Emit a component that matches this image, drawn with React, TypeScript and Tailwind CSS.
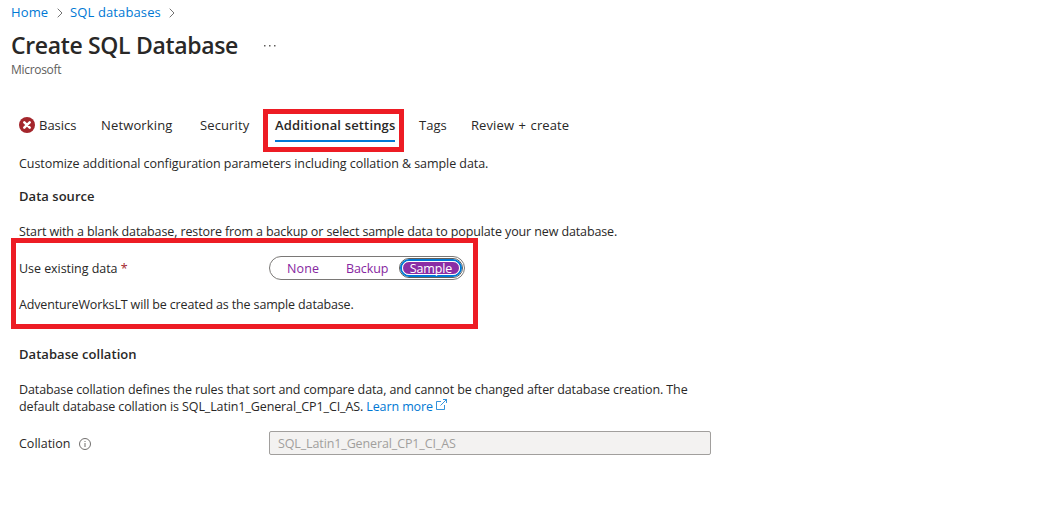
import type { ReactNode } from "react";

function Tab({ children, className = "" }: { children: ReactNode; className?: string }) {
  return (
    <button className={`flex h-[34px] shrink-0 items-center border-b-2 pt-[4px] text-[13px] ${className}`}>
      {children}
    </button>
  );
}

function Chevron() {
  return (
    <svg className="h-[10px] w-[6px] shrink-0" viewBox="0 0 6 10" fill="none" stroke="#737373">
      <path d="M.7.7 5 5 .7 9.3" />
    </svg>
  );
}

function ErrorIcon() {
  return (
    <svg className="-mt-[3px] mr-1 h-4 w-4 shrink-0" viewBox="0 0 16 16">
      <circle cx="8" cy="8" r="8" fill="#a4262c" />
      <path d="m5.3 5.3 5.4 5.4m0-5.4-5.4 5.4" stroke="#fff" strokeWidth="2.5" strokeLinecap="round" />
    </svg>
  );
}

function InfoIcon() {
  return (
    <svg className="mt-[1px] h-3 w-3 shrink-0" viewBox="0 0 12 12" fill="none" stroke="#605e5c">
      <circle cx="6" cy="6" r="5.5" strokeWidth=".9" />
      <path d="M6 5v4M6 3v1" strokeWidth=".9" />
    </svg>
  );
}

function ExternalIcon() {
  return (
    <svg className="ml-[3px] inline-block h-[11px] w-[11px] align-[1px]" viewBox="0 0 11 11" fill="none" stroke="#0078d4" strokeWidth=".8">
      <path d="M5 2.5H.5v8h8V6M7 .5h3.5V4M10.5.5 4.5 6.5" />
    </svg>
  );
}

export default function App() {
  return (
    <main className="relative h-[510px] w-[1040px] overflow-hidden bg-white font-['Open_Sans','Noto_Sans',sans-serif] text-[12.5px] whitespace-nowrap text-[#292827]">
      <nav className="flex h-[26px] items-center pl-[11px] text-[13px] tracking-[0.12px] text-[#0078d4]">
        <a className="w-[46px]">Home</a>
        <Chevron />
        <a className="ml-[7px] w-[99px]">SQL databases</a>
        <Chevron />
      </nav>
      <header className="mt-[2px] pl-[11px]">
        <div className="flex h-9 items-center">
          <h1 className="w-[253px] pb-[2px] text-[23px] font-semibold tracking-[-0.34px]">Create SQL Database</h1>
          <svg className="h-[2px] w-3" viewBox="0 0 12 2" fill="#605e5c">
            <path d="M0 0h1.5v1.5H0zM5 0h1.5v1.5H5zM10 0h1.5v1.5H10z" />
          </svg>
        </div>
        <p className="h-3 text-[12px] leading-[12px] tracking-[-0.3px] text-[#605e5c]">Microsoft</p>
      </header>

      <div className="mt-8 flex pl-[19px]">
        <Tab className="w-[82px] border-transparent"><ErrorIcon />Basics</Tab>
        <Tab className="w-[99px] border-transparent tracking-[0.15px]">Networking</Tab>
        <Tab className="w-[75px] border-transparent tracking-[0.12px]">Security</Tab>
        <Tab className="mr-6 w-[120px] border-[#0078d4] font-semibold tracking-[0.16px]">Additional settings</Tab>
        <Tab className="w-[52px] border-transparent">Tags</Tab>
        <Tab className="w-[100px] border-transparent tracking-[0.1px] [word-spacing:1px]">Review + create</Tab>
      </div>

      <div className="pl-[19px] tracking-[-0.11px]">
        <p className="mt-[12px] leading-5 tracking-[-0.06px]">Customize additional configuration parameters including collation &amp; sample data.</p>
        <h2 className="mt-[12px] text-[13px] leading-5 font-semibold tracking-[0.03px]">Data source</h2>
        <p className="mt-[16px] leading-5 tracking-[-0.115px]">Start with a blank database, restore from a backup or select sample data to populate your new database.</p>
        <div className="mt-[14px] flex h-6 items-center">
          <label className="w-[250px] pt-[2px] tracking-[-0.05px]">Use existing data <span className="text-[#a4262c]">*</span></label>
          <div className="flex h-6 w-[196px] items-center rounded-full border border-[#7a7876] text-[#8626a0]">
            <button className="ml-[17px] w-[59px] pt-[2px] text-left tracking-[0.1px]">None</button>
            <button className="w-[53px] pt-[2px] text-left">Backup</button>
            <button className="flex h-5 w-[64px] shrink-0 items-center justify-center rounded-full border border-[#605e5c] bg-white">
              <span className="flex h-[18px] w-[62px] items-center justify-center rounded-full border-2 border-[#0078d4]">
                <span className="flex h-[14px] w-[58px] items-center justify-center rounded-full border border-white bg-[#8a2da5] pt-[2px] text-white">Sample</span>
              </span>
            </button>
          </div>
        </div>
        <p className="mt-[15px] leading-5 tracking-[-0.145px]">AdventureWorksLT will be created as the sample database.</p>
        <h2 className="mt-[29px] text-[13px] leading-5 font-semibold tracking-[0.05px]">Database collation</h2>
        <p className="mt-[17px] leading-[17px] tracking-[-0.11px]">
          Database collation defines the rules that sort and compare data, and cannot be changed after database creation. The
          <br />
          default database collation is SQL_Latin1_General_CP1_CI_AS. <a className="text-[#0078d4]">Learn more<ExternalIcon /></a>
        </p>
        <div className="mt-4 flex h-6 items-center">
          <div className="flex w-[250px] items-center gap-[9px]"><label className="pt-[2px] tracking-normal">Collation</label><InfoIcon /></div>
          <input disabled value="SQL_Latin1_General_CP1_CI_AS" className="h-6 w-[442px] rounded-[2px] border border-[#a19f9d] bg-[#f3f2f1] px-2 tracking-[-0.12px] text-[#a19f9d]" />
        </div>
      </div>

      <div className="absolute top-[109px] left-[263px] h-[43px] w-[141px] border-5 border-[#ed1c24]" />
      <div className="absolute top-[238px] left-[11px] h-[91px] w-[467px] border-5 border-[#ed1c24]" />
    </main>
  );
}
